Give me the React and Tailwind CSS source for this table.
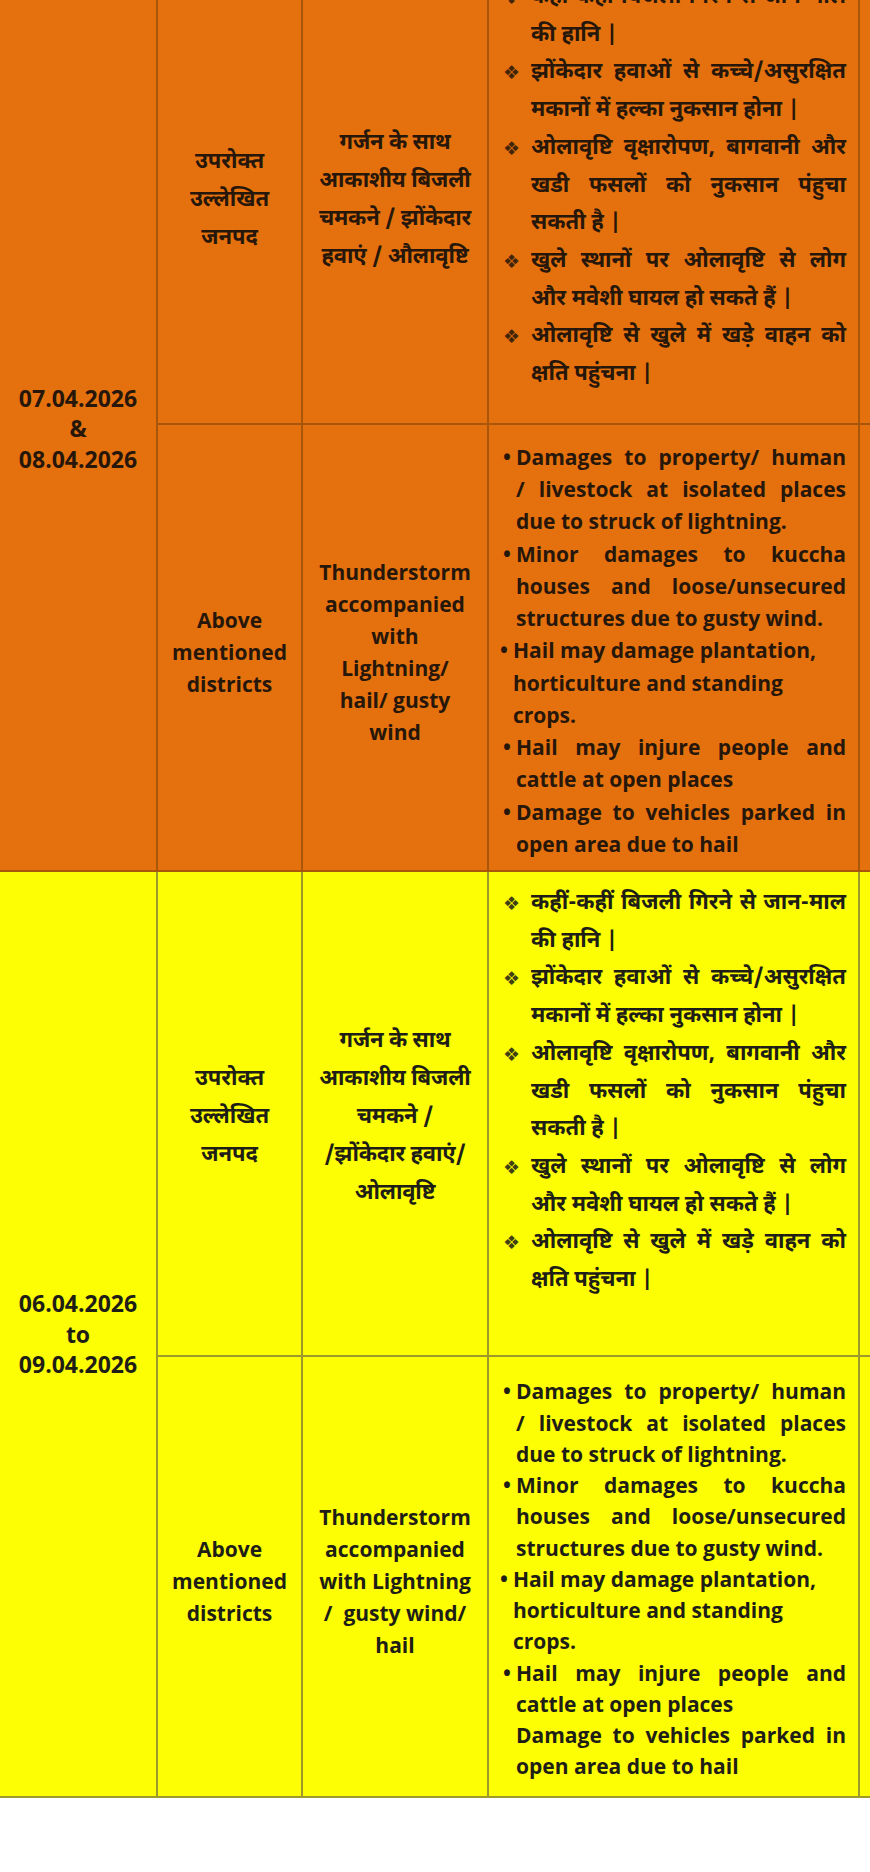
const HINDI = "font-['Noto_Sans_Devanagari','Lohit_Devanagari','Noto_Sans','FreeSans',sans-serif]";
const LATIN = "font-['Open_Sans','Liberation_Sans',sans-serif]";

const hindiPoints = [
  ["कहीं-कहीं बिजली गिरने से जान-माल", "की हानि |"],
  ["झोंकेदार हवाओं से कच्चे/असुरक्षित", "मकानों में हल्का नुकसान होना |"],
  ["ओलावृष्टि वृक्षारोपण, बागवानी और", "खडी फसलों को नुकसान पंहुचा", "सकती है |"],
  ["खुले स्थानों पर ओलावृष्टि से लोग", "और मवेशी घायल हो सकते हैं |"],
  ["ओलावृष्टि से खुले में खड़े वाहन को", "क्षति पहुंचना |"],
];

const englishPoints = [
  { lines: ["Damages to property/ human", "/ livestock at isolated places", "due to struck of lightning."] },
  { lines: ["Minor damages to kuccha", "houses and loose/unsecured", "structures due to gusty wind."] },
  { lines: ["Hail may damage plantation,", "horticulture and standing", "crops."], ragged: true },
  { lines: ["Hail may injure people and", "cattle at open places"] },
  { lines: ["Damage to vehicles parked in", "open area due to hail"], last: true },
];

const sections = [
  {
    bg: "bg-[#e5700e]",
    line: "border-[#a9560d]",
    ink: "text-[#26170a]",
    dates: ["07.04.2026", "&", "08.04.2026"],
    datePad: "pt-[18px]",
    hindiPad: "pt-[9px]",
    hindiH: "h-[455px]",
    engH: "h-[447px]",
    hindiHazard: ["गर्जन के साथ", "आकाशीय बिजली", "चमकने / झोंकेदार", "हवाएं / औलावृष्टि"],
    engHazard: ["Thunderstorm", "accompanied", "with", "Lightning/", "hail/ gusty", "wind"],
    engLead: "leading-[32.25px]",
    lastBullet: true,
  },
  {
    bg: "bg-[#fdfd04]",
    line: "border-[#9c9a2a]",
    ink: "text-[#1e1e16]",
    dates: ["06.04.2026", "to", "09.04.2026"],
    datePad: "pt-0",
    hindiPad: "pt-[13px]",
    hindiH: "h-[485px]",
    engH: "h-[441px]",
    hindiHazard: ["गर्जन के साथ", "आकाशीय बिजली", "चमकने /", "/झोंकेदार हवाएं/", "ओलावृष्टि"],
    engHazard: ["Thunderstorm", "accompanied", "with Lightning", "/  gusty wind/", "hail"],
    engLead: "leading-[31.25px]",
    lastBullet: false,
  },
];

function Line({ text, justify }) {
  return (
    <div className={justify ? "text-justify [text-align-last:justify] whitespace-nowrap" : "text-left whitespace-nowrap"}>
      {text}
    </div>
  );
}

function HindiList() {
  return (
    <div className={`${HINDI} text-[22px] font-bold leading-[37.7px]`}>
      {hindiPoints.map((lines, i) => (
        <div key={i} className="flex">
          <span className="w-[28px] shrink-0 font-['DejaVu_Sans',sans-serif] text-[19px] opacity-85">❖</span>
          <div className="flex-1">
            {lines.map((t, j) => (
              <Line key={j} text={t} justify={j < lines.length - 1} />
            ))}
          </div>
        </div>
      ))}
    </div>
  );
}

function EnglishList({ lead, lastBullet }) {
  return (
    <div className={`${LATIN} text-[21px] font-bold ${lead}`}>
      {englishPoints.map((p, i) => (
        <div key={i} className={`flex ${p.ragged ? "-ml-[3px]" : ""}`}>
          <span className="w-[13px] shrink-0">{p.last && !lastBullet ? "" : "•"}</span>
          <div className="flex-1">
            {p.lines.map((t, j) => (
              <Line key={j} text={t} justify={!p.ragged && j < p.lines.length - 1} />
            ))}
          </div>
        </div>
      ))}
    </div>
  );
}

function Stack({ lines, font, lead }) {
  return (
    <div className={`${font} ${lead} text-center font-bold`}>
      {lines.map((l, i) => (
        <div key={i} className="whitespace-pre">{l}</div>
      ))}
    </div>
  );
}

export default function App() {
  return (
    <div className="w-[870px] h-[1872px] overflow-hidden bg-white">
      <div className="-mt-[32px]">
        <table className="w-[870px] table-fixed border-collapse">
          <colgroup>
            <col className="w-[157px]" />
            <col className="w-[145px]" />
            <col className="w-[186px]" />
            <col className="w-[371px]" />
            <col className="w-[11px]" />
          </colgroup>
          {sections.map((s, k) => (
            <tbody key={k} className={`${s.bg} ${s.ink}`}>
              <tr>
                <td
                  rowSpan={2}
                  className={`border-r-2 border-b-2 ${s.line} align-middle text-center ${s.datePad}`}
                >
                  <Stack lines={s.dates} font={`${LATIN} text-[23px]`} lead="leading-[30.5px]" />
                </td>
                <td className={`border-2 ${s.line} align-middle pt-[8px] ${s.hindiH}`}>
                  <Stack lines={["उपरोक्त", "उल्लेखित", "जनपद"]} font={`${HINDI} text-[22px]`} lead="leading-[38px]" />
                </td>
                <td className={`border-2 ${s.line} align-middle pt-[8px]`}>
                  <Stack lines={s.hindiHazard} font={`${HINDI} text-[22px] tracking-[-0.2px]`} lead="leading-[38px]" />
                </td>
                <td className={`border-2 ${s.line} align-top pl-[14px] pr-[12px] ${s.hindiPad}`}>
                  <HindiList />
                </td>
                <td className={`border-l-2 border-b-2 ${s.line}`} />
              </tr>
              <tr>
                <td className={`border-2 ${s.line} align-middle pt-[8px] ${s.engH}`}>
                  <Stack lines={["Above", "mentioned", "districts"]} font={`${LATIN} text-[21px]`} lead="leading-[32px]" />
                </td>
                <td className={`border-2 ${s.line} align-middle pt-[8px]`}>
                  <Stack lines={s.engHazard} font={`${LATIN} text-[21px]`} lead="leading-[32px]" />
                </td>
                <td className={`border-2 ${s.line} align-middle pl-[14px] pr-[12px] pt-[6px]`}>
                  <EnglishList lead={s.engLead} lastBullet={s.lastBullet} />
                </td>
                <td className={`border-l-2 border-b-2 ${s.line}`} />
              </tr>
            </tbody>
          ))}
        </table>
      </div>
    </div>
  );
}
